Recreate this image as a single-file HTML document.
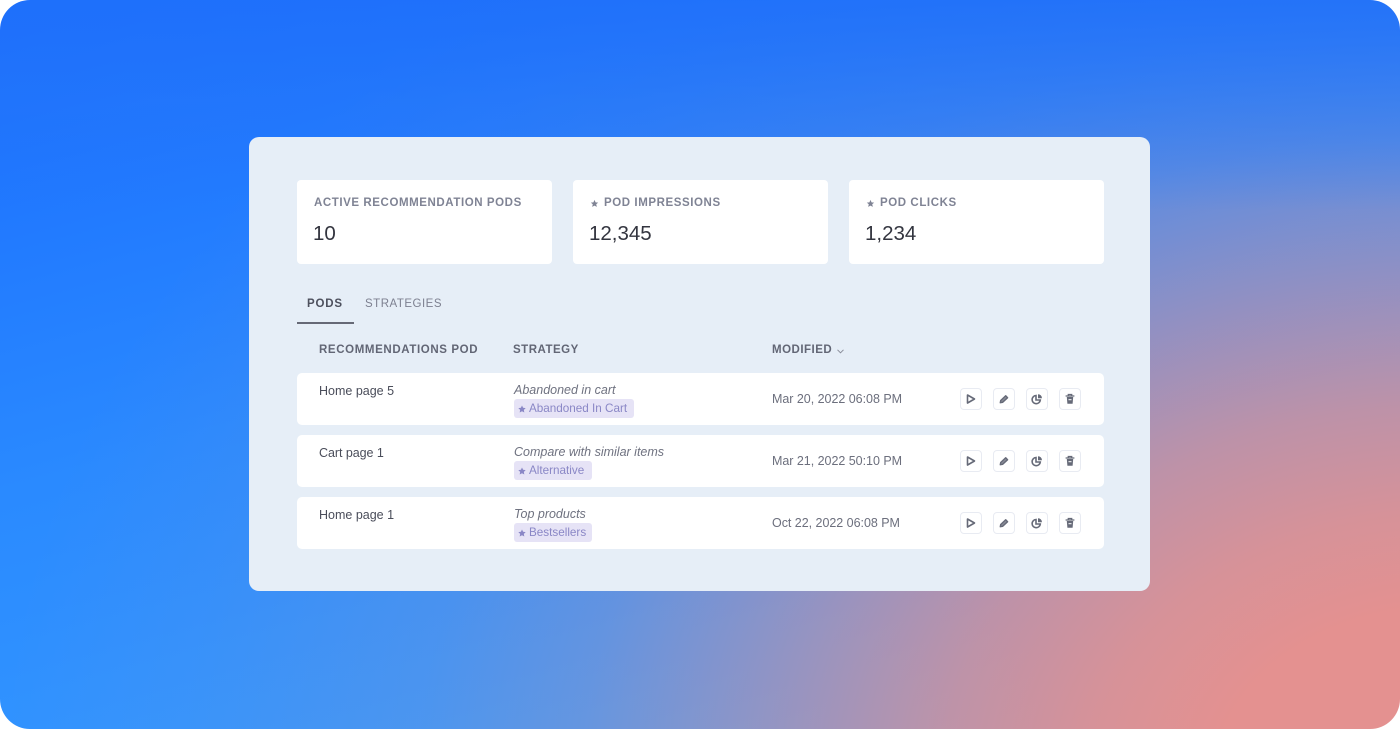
<!DOCTYPE html>
<html><head><meta charset="utf-8"><style>
html,body{margin:0;padding:0;width:1400px;height:729px;background:#fff;overflow:hidden}
*{box-sizing:border-box}
body{font-family:"Liberation Sans",sans-serif;position:relative}
#bg{position:absolute;left:0;top:0;width:1400px;height:729px;border-radius:30px;overflow:hidden;
background:
linear-gradient(180deg,rgba(31,112,250,.85) 0,rgba(36,118,248,.5) 100px,rgba(40,125,250,0) 210px),
radial-gradient(ellipse 1450px 1074px at 1450px 780px,rgba(228,145,144,1) 0,rgba(228,145,144,1) 16%,rgba(228,145,144,.92) 25%,rgba(228,145,144,.78) 35%,rgba(228,145,144,.58) 45%,rgba(228,145,144,.44) 52%,rgba(228,145,144,.28) 60%,rgba(228,145,144,.14) 71%,rgba(228,145,144,.05) 87%,rgba(228,145,144,0) 100%),
linear-gradient(165deg,#1a6cff 0%,#2a8aff 45%,#3aa0ff 100%)}
#card{position:absolute;left:249px;top:137px;width:901px;height:454px;background:#e6eef7;border-radius:10px}
#c{position:absolute;left:0;top:0;width:1400px;height:729px;filter:blur(.35px)}
.a{position:absolute;white-space:nowrap}
.stat{position:absolute;top:180px;width:255px;height:84px;background:#fff;border-radius:4px}
.lab{font-size:11.5px;font-weight:bold;color:#7f8394;letter-spacing:.58px;line-height:14px;top:196px}
.num{font-size:20.5px;color:#33353f;line-height:26px;top:221px}
.th{font-size:11.5px;font-weight:bold;color:#626675;letter-spacing:.5px;line-height:14px;top:343px}
.row{position:absolute;left:297px;width:807px;height:52px;background:#fff;border-radius:5px}
.nm{font-size:12.5px;color:#4a4d5a;line-height:16px}
.st{font-size:12.5px;font-style:italic;color:#6f7280;line-height:16px}
.tag{position:absolute;left:514px;height:19px;background:#e6e3f6;border-radius:3px;font-size:11.7px;color:#8a87c6;line-height:20px;padding-left:15px;white-space:nowrap}
.tag svg{position:absolute;left:3.5px;top:5.5px}
.dt{font-size:12.5px;color:#6c6f7d;line-height:16px;left:772px;letter-spacing:-.03px}
.b{position:absolute;width:22px;height:22px;background:#fff;border:1.5px solid #e8ebf2;border-radius:4px}
.b svg{position:absolute;left:2px;top:2px}
</style></head><body>
<div id="bg"></div>
<div id="card"></div>
<div id="c">
<div class="stat" style="left:297px"></div>
<div class="stat" style="left:573px"></div>
<div class="stat" style="left:849px"></div>
<div class="a lab" style="left:314px">ACTIVE RECOMMENDATION PODS</div>
<svg class="a" style="left:590px;top:199px" width="9" height="9" viewBox="0 0 10 10"><path d="M5 1l1.2 2.7 2.9.3-2.2 1.9.7 2.9L5 7.3 2.400 8.800l.7-2.900L.9 4l2.900-.3z" fill="#7f8394"/></svg>
<div class="a lab" style="left:604px">POD IMPRESSIONS</div>
<svg class="a" style="left:866px;top:199px" width="9" height="9" viewBox="0 0 10 10"><path d="M5 1l1.2 2.7 2.9.3-2.2 1.9.7 2.900L5 7.300 2.400 8.800l.7-2.900L.9 4l2.900-.3z" fill="#7f8394"/></svg>
<div class="a lab" style="left:880px">POD CLICKS</div>
<div class="a num" style="left:313px">10</div>
<div class="a num" style="left:589px">12,345</div>
<div class="a num" style="left:865px">1,234</div>

<div class="a" style="left:307px;top:297px;font-size:11.500px;font-weight:bold;color:#4d505d;letter-spacing:.8px;line-height:14px">PODS</div>
<div class="a" style="left:365px;top:297px;font-size:11.500px;color:#7d8090;letter-spacing:.5px;line-height:14px">STRATEGIES</div>
<div class="a" style="left:297px;top:322px;width:57px;height:2px;background:#666976"></div>

<div class="a th" style="left:319px;letter-spacing:.62px">RECOMMENDATIONS POD</div>
<div class="a th" style="left:513px">STRATEGY</div>
<div class="a th" style="left:772px">MODIFIED</div>
<svg class="a" style="left:836px;top:348px" width="9" height="7" viewBox="0 0 9 7"><path d="M1.500 1.800L4.500 4.800L7.500 1.800" fill="none" stroke="#8a8d9a" stroke-width="1"/></svg>

<div class="row" style="top:373px"></div>
<div class="row" style="top:435px"></div>
<div class="row" style="top:497px"></div>

<div class="a nm" style="left:319px;top:383px">Home page 5</div>
<div class="a nm" style="left:319px;top:445px;letter-spacing:-.05px">Cart page 1</div>
<div class="a nm" style="left:319px;top:507px">Home page 1</div>

<div class="a st" style="left:514px;top:382px">Abandoned in cart</div>
<div class="a st" style="left:514px;top:444px">Compare with similar items</div>
<div class="a st" style="left:514px;top:506px">Top products</div>

<div class="tag" style="top:399px;width:120px"><svg width="8" height="8" viewBox="0 0 10 10"><path d="M5 .6l1.400 2.900 3.200.4-2.300 2.200.6 3.200L5 7.800 2.100 9.300l.6-3.200L.4 3.900l3.200-.4z" fill="#8a87c6"/></svg>Abandoned In Cart</div>
<div class="tag" style="top:461px;width:78px"><svg width="8" height="8" viewBox="0 0 10 10"><path d="M5 .6l1.400 2.900 3.200.4-2.300 2.200.6 3.200L5 7.800 2.100 9.300l.6-3.200L.4 3.900l3.200-.4z" fill="#8a87c6"/></svg>Alternative</div>
<div class="tag" style="top:523px;width:78px"><svg width="8" height="8" viewBox="0 0 10 10"><path d="M5 .6l1.400 2.900 3.200.4-2.300 2.200.6 3.200L5 7.800 2.100 9.300l.6-3.200L.4 3.900l3.200-.4z" fill="#8a87c6"/></svg>Bestsellers</div>

<div class="a dt" style="top:391px">Mar 20, 2022 06:08 PM</div>
<div class="a dt" style="top:453px">Mar 21, 2022 50:10 PM</div>
<div class="a dt" style="top:515px">Oct 22, 2022 06:08 PM</div>

<div class="b" style="left:960px;top:388px"><svg width="16" height="16" viewBox="0 0 16 16"><path d="M4.500 4L11.500 8L4.500 12Z" fill="none" stroke="#666a78" stroke-width="1.600" stroke-linejoin="round"/></svg></div>
<div class="b" style="left:993px;top:388px"><svg width="16" height="16" viewBox="0 0 16 16"><path d="M4.300 11.700L4.700 9.500L9.700 4.800L11.600 6.700L6.600 11.300Z" fill="#8a8d98" stroke="#666a78" stroke-width="1.400" stroke-linejoin="round"/></svg></div>
<div class="b" style="left:1026px;top:388px"><svg width="16" height="16" viewBox="0 0 16 16"><path d="M7 4.500A4.100 4.100 0 1 0 11.300 9H7Z" fill="none" stroke="#666a78" stroke-width="1.600"/><path d="M9 3.200A4 4 0 0 1 13 7.200H9Z" fill="#666a78"/></svg></div>
<div class="b" style="left:1059px;top:388px"><svg width="16" height="16" viewBox="0 0 16 16"><path d="M4.800 6H11.200L10.600 12.800H5.400Z" fill="#666a78"/><path d="M3.600 5H12.400M6.300 5V3.500H9.700V5" fill="none" stroke="#666a78" stroke-width="1.300"/><path d="M6.500 8.700H9.500" stroke="#fff" stroke-width="1"/></svg></div>

<div class="b" style="left:960px;top:450px"><svg width="16" height="16" viewBox="0 0 16 16"><path d="M4.500 4L11.500 8L4.500 12Z" fill="none" stroke="#666a78" stroke-width="1.600" stroke-linejoin="round"/></svg></div>
<div class="b" style="left:993px;top:450px"><svg width="16" height="16" viewBox="0 0 16 16"><path d="M4.300 11.700L4.700 9.500L9.700 4.800L11.600 6.700L6.600 11.300Z" fill="#8a8d98" stroke="#666a78" stroke-width="1.400" stroke-linejoin="round"/></svg></div>
<div class="b" style="left:1026px;top:450px"><svg width="16" height="16" viewBox="0 0 16 16"><path d="M7 4.500A4.100 4.100 0 1 0 11.300 9H7Z" fill="none" stroke="#666a78" stroke-width="1.600"/><path d="M9 3.200A4 4 0 0 1 13 7.200H9Z" fill="#666a78"/></svg></div>
<div class="b" style="left:1059px;top:450px"><svg width="16" height="16" viewBox="0 0 16 16"><path d="M4.800 6H11.200L10.600 12.800H5.400Z" fill="#666a78"/><path d="M3.600 5H12.400M6.300 5V3.500H9.700V5" fill="none" stroke="#666a78" stroke-width="1.300"/><path d="M6.500 8.700H9.500" stroke="#fff" stroke-width="1"/></svg></div>

<div class="b" style="left:960px;top:512px"><svg width="16" height="16" viewBox="0 0 16 16"><path d="M4.500 4L11.500 8L4.500 12Z" fill="none" stroke="#666a78" stroke-width="1.600" stroke-linejoin="round"/></svg></div>
<div class="b" style="left:993px;top:512px"><svg width="16" height="16" viewBox="0 0 16 16"><path d="M4.300 11.700L4.700 9.500L9.700 4.800L11.600 6.700L6.600 11.300Z" fill="#8a8d98" stroke="#666a78" stroke-width="1.400" stroke-linejoin="round"/></svg></div>
<div class="b" style="left:1026px;top:512px"><svg width="16" height="16" viewBox="0 0 16 16"><path d="M7 4.500A4.100 4.100 0 1 0 11.300 9H7Z" fill="none" stroke="#666a78" stroke-width="1.600"/><path d="M9 3.200A4 4 0 0 1 13 7.200H9Z" fill="#666a78"/></svg></div>
<div class="b" style="left:1059px;top:512px"><svg width="16" height="16" viewBox="0 0 16 16"><path d="M4.800 6H11.200L10.600 12.800H5.400Z" fill="#666a78"/><path d="M3.600 5H12.400M6.300 5V3.500H9.700V5" fill="none" stroke="#666a78" stroke-width="1.300"/><path d="M6.500 8.700H9.500" stroke="#fff" stroke-width="1"/></svg></div>
</div>
</body></html>
